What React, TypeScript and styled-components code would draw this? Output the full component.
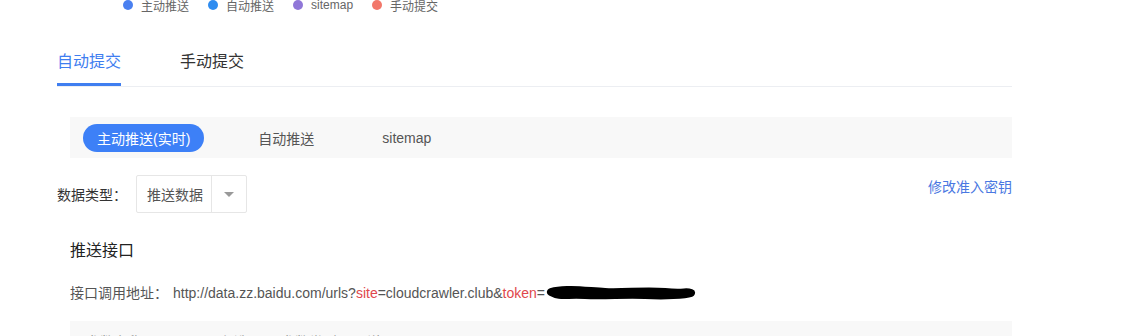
import React from "react";
import styled, { createGlobalStyle } from "styled-components";

const Global = createGlobalStyle`
  html, body { margin: 0; padding: 0; background: #fff; }
  body { font-family: "Liberation Sans", "Noto Sans CJK SC", sans-serif; color: #333; overflow: hidden; }
`;

const Page = styled.div`
  width: 955px;
  margin-left: 57px;
  height: 336px;
  overflow: hidden;
`;

const Legend = styled.div`
  display: flex;
  gap: 19px;
  margin-left: 66px;
  margin-top: -4px;
  height: 18px;
  align-items: center;
  font-size: 12px;
  color: #666;
`;

const LegendItem = styled.div`
  display: flex;
  align-items: center;
  gap: 8px;
`;

const Dot = styled.span<{ $c: string }>`
  width: 10px;
  height: 10px;
  border-radius: 50%;
  background: ${(p) => p.$c};
`;

const Tabs = styled.div`
  display: flex;
  gap: 59px;
  margin-top: 36px;
  border-bottom: 1px solid #eceef2;
`;

const Tab = styled.div<{ $active?: boolean }>`
  font-size: 16px;
  line-height: 24px;
  padding-bottom: 9px;
  color: ${(p) => (p.$active ? "#3f7ef0" : "#333")};
  border-bottom: 3px solid ${(p) => (p.$active ? "#3f7ef0" : "transparent")};
`;

const SubBar = styled.div`
  margin: 30px 0 0 13px;
  height: 41px;
  background: #f8f8f8;
  display: flex;
  align-items: center;
  gap: 40px;
  padding-left: 13px;
`;

const SubItem = styled.div<{ $active?: boolean }>`
  height: 28px;
  padding: 0 14px;
  border-radius: 14px;
  display: flex;
  align-items: center;
  font-size: 14px;
  color: ${(p) => (p.$active ? "#fff" : "#555")};
  background: ${(p) => (p.$active ? "#3d80f7" : "transparent")};
`;

const Row = styled.div`
  display: flex;
  align-items: center;
  margin-top: 17px;
  height: 38px;
`;

const Label = styled.div`
  font-size: 14px;
  color: #333;
  width: 79px;
`;

const Select = styled.div`
  display: flex;
  height: 36px;
  width: 109px;
  border: 1px solid #e6e6e6;
  border-radius: 2px;
  font-size: 14px;
  color: #555;
`;

const SelectValue = styled.div`
  width: 75px;
  padding-left: 10px;
  box-sizing: border-box;
  display: flex;
  align-items: center;
  border-right: 1px solid #e6e6e6;
`;

const Arrow = styled.div`
  flex: 1;
  display: flex;
  align-items: center;
  justify-content: center;
  &::after {
    content: "";
    border-left: 5px solid transparent;
    border-right: 5px solid transparent;
    border-top: 5px solid #999;
  }
`;

const Link = styled.a`
  margin-left: auto;
  font-size: 14px;
  color: #4a78e2;
  text-decoration: none;
  margin-top: -16px;
`;

const Section = styled.div`
  padding-left: 13px;
`;

const Title = styled.div`
  margin-top: 26px;
  font-size: 16px;
  line-height: 24px;
  color: #222;
  font-weight: 400;
`;

const UrlLine = styled.div`
  margin-top: 20px;
  font-size: 14px;
  line-height: 20px;
  color: #555;
  display: flex;
  align-items: center;
  white-space: nowrap;
`;

const UrlLabel = styled.span`
  margin-right: 5px;
`;

const Red = styled.span`
  color: #e0474c;
`;

const Scribble = styled.svg`
  display: block;
`;

const TableHead = styled.div`
  margin-top: 18px;
  height: 40px;
  background: #f8f8f8;
  display: grid;
  grid-template-columns: 106px 89px 86px 1fr;
  padding-left: 16px;
  align-items: center;
  font-size: 14px;
  color: #888;
`;

export default function App() {
  return (
    <>
      <Global />
      <Page>
        <Legend>
          <LegendItem><Dot $c="#4a80f0" />主动推送</LegendItem>
          <LegendItem><Dot $c="#2f8cf0" />自动推送</LegendItem>
          <LegendItem><Dot $c="#9077d8" />sitemap</LegendItem>
          <LegendItem><Dot $c="#f2776a" />手动提交</LegendItem>
        </Legend>
        <Tabs>
          <Tab $active>自动提交</Tab>
          <Tab>手动提交</Tab>
        </Tabs>
        <SubBar>
          <SubItem $active>主动推送(实时)</SubItem>
          <SubItem>自动推送</SubItem>
          <SubItem>sitemap</SubItem>
        </SubBar>
        <Row>
          <Label>数据类型：</Label>
          <Select>
            <SelectValue>推送数据</SelectValue>
            <Arrow />
          </Select>
          <Link href="#">修改准入密钥</Link>
        </Row>
        <Section>
          <Title>推送接口</Title>
          <UrlLine>
            <UrlLabel>接口调用地址：</UrlLabel>
            http://data.zz.baidu.com/urls?<Red>site</Red>=cloudcrawler.club&amp;<Red>token</Red>=
            <Scribble width="152" height="14" viewBox="0 0 152 14">
              <path d="M6 6 C 20 2, 40 5, 60 6 S 100 4, 120 6 S 140 5, 146 7 C 140 9, 120 10, 100 9 S 60 10, 40 9 S 15 11, 6 6 Z" fill="#000" stroke="#000" strokeWidth="8" strokeLinejoin="round" strokeLinecap="round" />
            </Scribble>
          </UrlLine>
          <TableHead>
            <span>参数名称</span>
            <span>是否必选</span>
            <span>参数类型</span>
            <span>说明</span>
          </TableHead>
        </Section>
      </Page>
    </>
  );
}
